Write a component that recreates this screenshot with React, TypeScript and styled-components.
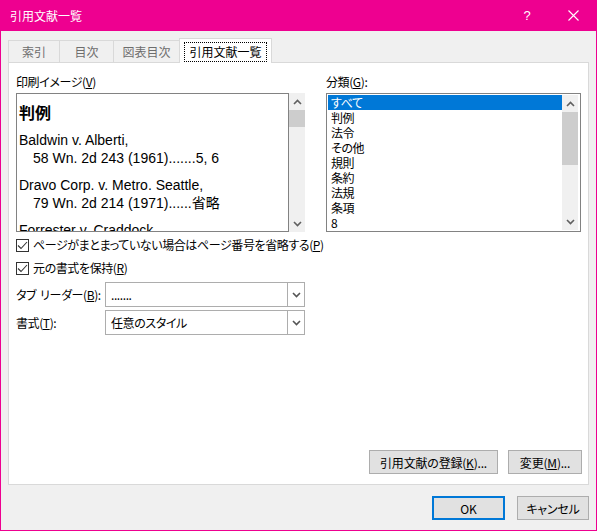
import { FC, ReactNode } from "react";
import styled, { createGlobalStyle } from "styled-components";

const GlobalStyle = createGlobalStyle`
  html, body {
    margin: 0;
    padding: 0;
    background: #ffffff;
  }
  body {
    font-family: "Noto Sans", "Noto Sans CJK JP", sans-serif;
    font-size: 12px;
  }
  * {
    box-sizing: border-box;
  }
`;

const ui = `"Noto Sans CJK JP", "Noto Sans", sans-serif`;

const Window = styled.div`
  width: 597px;
  height: 531px;
  border: 1px solid #ee0090;
  border-top: none;
  background: #f0f0f0;
  display: flex;
  flex-direction: column;
  font-family: ${ui};
  font-feature-settings: "palt";
  letter-spacing: -0.4px;
  font-size: 12px;
  color: #000;
`;

const TitleBar = styled.div`
  height: 31px;
  background: #ee0090;
  display: flex;
  align-items: center;
  color: #fff;
  padding-left: 9px;
`;

const Title = styled.div`
  flex: 1;
  font-size: 12px;
  line-height: 16px;
  letter-spacing: 0;
`;

const TitleButton = styled.div`
  width: 46px;
  height: 31px;
  display: flex;
  align-items: center;
  justify-content: center;
  font-family: "Liberation Sans", sans-serif;
  font-size: 13px;
`;

const Content = styled.div`
  flex: 1;
  display: flex;
  flex-direction: column;
  padding: 9px 7px 0 7px;
`;

const TabStrip = styled.div`
  display: flex;
  align-items: flex-end;
  height: 22px;
  padding-left: 1px;
`;

const Tab = styled.div<{ $w: number; $active?: boolean }>`
  width: ${(p) => p.$w}px;
  height: ${(p) => (p.$active ? 25 : 22)}px;
  margin-left: -1px;
  margin-bottom: ${(p) => (p.$active ? -1 : 0)}px;
  border: 1px solid #d9d9d9;
  border-bottom: none;
  background: ${(p) => (p.$active ? "#ffffff" : "#f0f0f0")};
  color: ${(p) => (p.$active ? "#000" : "#6d6d6d")};
  display: flex;
  align-items: center;
  justify-content: center;
  position: relative;
  z-index: ${(p) => (p.$active ? 2 : 1)};
  font-size: 12px;
  font-feature-settings: normal;
  letter-spacing: 0;
`;

const FocusRect = styled.span`
  border: 1px dotted #000;
  padding: 1px 4px;
  line-height: 16px;
  margin-top: 2px;
`;

const Panel = styled.div`
  height: 423px;
  border: 1px solid #d9d9d9;
  background: #ffffff;
  display: flex;
  flex-direction: column;
  padding: 11px 6px 10px 7px;
`;

const Columns = styled.div`
  display: flex;
  gap: 21px;
`;

const Column = styled.div<{ $w: number }>`
  width: ${(p) => p.$w}px;
  display: flex;
  flex-direction: column;
`;

const Label = styled.div`
  line-height: 16px;
  height: 16px;
  margin-bottom: 3px;
  white-space: nowrap;
`;

const Key = styled.span`
  text-decoration: underline;
  text-underline-offset: 1px;
`;

const Space = styled.span`
  display: inline-block;
  width: 4px;
`;

const PreviewRow = styled.div`
  display: flex;
  height: 139px;
`;

const PreviewBox = styled.div`
  width: 273px;
  height: 139px;
  border: 1px solid #828282;
  overflow: hidden;
  padding: 7px 2px 0 2px;
  font-family: "Liberation Sans", "Noto Sans CJK JP", sans-serif;
  font-feature-settings: normal;
  letter-spacing: 0;
  font-size: 14px;
  line-height: 18px;
`;

const PreviewHeading = styled.div`
  font-family: "Noto Sans CJK JP", sans-serif;
  font-weight: bold;
  font-size: 16px;
  line-height: 22px;
  margin-bottom: 8px;
`;

const Entry = styled.div`
  margin-bottom: 9px;
  white-space: nowrap;
`;

const Indent = styled.div`
  padding-left: 14px;
`;

const ScrollTrack = styled.div<{ $thumbTop: number; $thumbH: number }>`
  width: 16px;
  height: 100%;
  background: #f0f0f0;
  position: relative;
  flex-shrink: 0;
  &::after {
    content: "";
    position: absolute;
    left: 0;
    right: 0;
    top: ${(p) => p.$thumbTop}px;
    height: ${(p) => p.$thumbH}px;
    background: #cdcdcd;
  }
`;

const ArrowSlot = styled.div<{ $bottom?: boolean }>`
  position: absolute;
  left: 0;
  right: 0;
  height: 17px;
  ${(p) => (p.$bottom ? "bottom: 0;" : "top: 0;")}
  display: flex;
  align-items: center;
  justify-content: center;
`;

const Chevron: FC<{ up?: boolean; color?: string }> = ({ up, color = "#606060" }) => (
  <svg width="9" height="6" viewBox="0 0 9 6">
    <polyline
      points={up ? "1,5 4.5,1.5 8,5" : "1,1 4.5,4.5 8,1"}
      fill="none"
      stroke={color}
      strokeWidth="1.6"
    />
  </svg>
);

const Scrollbar: FC<{ thumbTop: number; thumbH: number }> = ({ thumbTop, thumbH }) => (
  <ScrollTrack $thumbTop={thumbTop} $thumbH={thumbH}>
    <ArrowSlot>
      <Chevron up />
    </ArrowSlot>
    <ArrowSlot $bottom>
      <Chevron />
    </ArrowSlot>
  </ScrollTrack>
);

const CheckRow = styled.label`
  display: flex;
  align-items: center;
  gap: 4px;
  height: 20px;
  line-height: 20px;
  white-space: nowrap;
`;

const CheckBox = styled.span`
  width: 13px;
  height: 13px;
  border: 1px solid #333;
  background: #fff;
  display: flex;
  align-items: center;
  justify-content: center;
  flex-shrink: 0;
`;

const Checks = styled.div`
  display: flex;
  flex-direction: column;
  gap: 3px;
  margin-top: 3px;
`;

const Check: FC<{ children: ReactNode }> = ({ children }) => (
  <CheckRow>
    <CheckBox>
      <svg width="11" height="9" viewBox="0 0 11 9">
        <polyline points="1,4.5 4,7.5 10,1" fill="none" stroke="#333" strokeWidth="1.1" />
      </svg>
    </CheckBox>
    <span>{children}</span>
  </CheckRow>
);

const ComboRows = styled.div`
  display: flex;
  flex-direction: column;
  gap: 3px;
  margin-top: 4px;
`;

const ComboRow = styled.div`
  display: flex;
  align-items: center;
`;

const ComboLabel = styled.div`
  width: 89px;
  flex-shrink: 0;
  white-space: nowrap;
`;

const ComboBox = styled.div`
  width: 200px;
  height: 25px;
  border: 1px solid #adadad;
  background: #fff;
  display: flex;
  align-items: stretch;
`;

const ComboValue = styled.div`
  flex: 1;
  padding-left: 5px;
  display: flex;
  align-items: center;
`;

const ComboButton = styled.div`
  width: 17px;
  border-left: 1px solid #adadad;
  display: flex;
  align-items: center;
  justify-content: center;
`;

const Combo: FC<{ label: ReactNode; value: string }> = ({ label, value }) => (
  <ComboRow>
    <ComboLabel>{label}</ComboLabel>
    <ComboBox>
      <ComboValue>{value}</ComboValue>
      <ComboButton>
        <Chevron color="#555" />
      </ComboButton>
    </ComboBox>
  </ComboRow>
);

const ListBox = styled.div`
  height: 139px;
  border: 1px solid #828282;
  padding: 1px 2px 1px 1px;
  display: flex;
`;

const ListItems = styled.div`
  flex: 1;
  overflow: hidden;
`;

const ListItem = styled.div<{ $selected?: boolean }>`
  height: 15px;
  line-height: 15px;
  padding-left: 3px;
  background: ${(p) => (p.$selected ? "#0078d7" : "transparent")};
  color: ${(p) => (p.$selected ? "#fff" : "#000")};
`;

const PanelButtons = styled.div`
  margin-top: auto;
  display: flex;
  justify-content: flex-end;
  gap: 10px;
`;

const Button = styled.button<{ $w: number; $default?: boolean }>`
  width: ${(p) => p.$w}px;
  height: 24px;
  padding: 0;
  background: #e1e1e1;
  border: ${(p) => (p.$default ? "2px solid #0078d7" : "1px solid #adadad")};
  font-family: ${ui};
  font-feature-settings: "palt";
  letter-spacing: -0.2px;
  font-size: 12px;
  color: #000;
  display: flex;
  align-items: center;
  justify-content: center;
`;

const Footer = styled.div`
  display: flex;
  justify-content: flex-end;
  gap: 12px;
  margin-top: 11px;
`;

const categories = ["すべて", "判例", "法令", "その他", "規則", "条約", "法規", "条項", "8"];

export default function App() {
  return (
    <>
      <GlobalStyle />
      <Window>
        <TitleBar>
          <Title>引用文献一覧</Title>
          <TitleButton>?</TitleButton>
          <TitleButton>
            <svg width="11" height="11" viewBox="0 0 11 11">
              <path d="M0.5 0.5 L10.5 10.5 M10.5 0.5 L0.5 10.5" stroke="#fff" strokeWidth="1.1" />
            </svg>
          </TitleButton>
        </TitleBar>
        <Content>
          <TabStrip>
            <Tab $w={52}>索引</Tab>
            <Tab $w={55}>目次</Tab>
            <Tab $w={67}>図表目次</Tab>
            <Tab $w={93} $active>
              <FocusRect>引用文献一覧</FocusRect>
            </Tab>
          </TabStrip>
          <Panel>
            <Columns>
              <Column $w={289}>
                <Label>
                  印刷イメージ(<Key>V</Key>)
                </Label>
                <PreviewRow>
                  <PreviewBox>
                    <PreviewHeading>判例</PreviewHeading>
                    <Entry>
                      Baldwin v. Alberti,
                      <Indent>58 Wn. 2d 243 (1961).......5, 6</Indent>
                    </Entry>
                    <Entry>
                      Dravo Corp. v. Metro. Seattle,
                      <Indent>79 Wn. 2d 214 (1971)......省略</Indent>
                    </Entry>
                    <Entry>Forrester v. Craddock,</Entry>
                  </PreviewBox>
                  <Scrollbar thumbTop={17} thumbH={17} />
                </PreviewRow>
                <Checks>
                  <Check>
                    ページがまとまっていない場合はページ番号を省略する(<Key>P</Key>)
                  </Check>
                  <Check>
                    元の書式を保持(<Key>R</Key>)
                  </Check>
                </Checks>
                <ComboRows>
                  <Combo
                    label={
                      <>
                        タブ<Space />リーダー(<Key>B</Key>):
                      </>
                    }
                    value="......."
                  />
                  <Combo
                    label={
                      <>
                        書式(<Key>T</Key>):
                      </>
                    }
                    value="任意のスタイル"
                  />
                </ComboRows>
              </Column>
              <Column $w={255}>
                <Label>
                  分類(<Key>G</Key>):
                </Label>
                <ListBox>
                  <ListItems>
                    {categories.map((c, i) => (
                      <ListItem key={c} $selected={i === 0}>
                        {c}
                      </ListItem>
                    ))}
                  </ListItems>
                  <Scrollbar thumbTop={17} thumbH={53} />
                </ListBox>
              </Column>
            </Columns>
            <PanelButtons>
              <Button $w={129}>
                引用文献の登録(<Key>K</Key>)...
              </Button>
              <Button $w={74}>
                変更(<Key>M</Key>)...
              </Button>
            </PanelButtons>
          </Panel>
          <Footer>
            <Button $w={73} $default>
              OK
            </Button>
            <Button $w={72}>キャンセル</Button>
          </Footer>
        </Content>
      </Window>
    </>
  );
}
